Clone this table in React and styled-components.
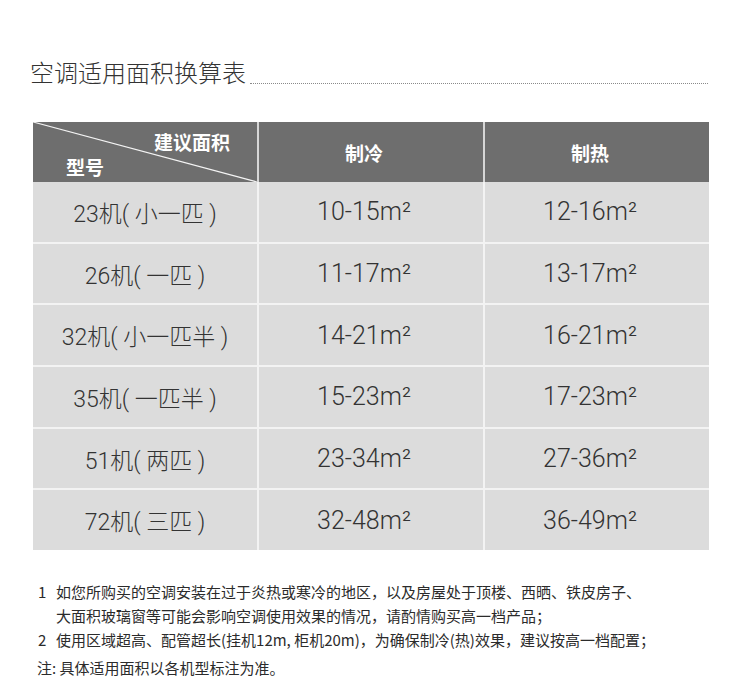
import React from 'react'
import styled, { createGlobalStyle } from 'styled-components'

const GlobalStyle = createGlobalStyle`
  html, body {
    margin: 0;
    padding: 0;
    background: #fff;
  }
  body {
    font-family: "Noto Sans CJK SC", "Noto Sans", sans-serif;
    color: #333;
  }
`

const rows = [
  { model: '23机( 小一匹 )', cool: '10-15', heat: '12-16' },
  { model: '26机( 一匹 )', cool: '11-17', heat: '13-17' },
  { model: '32机( 小一匹半 )', cool: '14-21', heat: '16-21' },
  { model: '35机( 一匹半 )', cool: '15-23', heat: '17-23' },
  { model: '51机( 两匹 )', cool: '23-34', heat: '27-36' },
  { model: '72机( 三匹 )', cool: '32-48', heat: '36-49' },
]

const App = () => {
  return (
    <Page>
      <GlobalStyle />
      <TitleBar>
        <Title>空调适用面积换算表</Title>
        <Dots />
      </TitleBar>

      <Table>
        <HeadRow>
          <CornerCell>
            <Diagonal viewBox="0 0 100 100" preserveAspectRatio="none">
              <line x1="0" y1="0" x2="100" y2="100" stroke="#f4f4f4" strokeWidth="1.2" vectorEffect="non-scaling-stroke" />
            </Diagonal>
            <CornerTop>建议面积</CornerTop>
            <CornerBottom>型号</CornerBottom>
          </CornerCell>
          <HeadCell>制冷</HeadCell>
          <HeadCell>制热</HeadCell>
        </HeadRow>
        <Body>
          {rows.map((r) => (
            <Row key={r.model}>
              <Cell>{r.model}</Cell>
              <Cell $value>{r.cool}m²</Cell>
              <Cell $value>{r.heat}m²</Cell>
            </Row>
          ))}
        </Body>
      </Table>

      <Notes>
        <Note>
          <Num>1</Num>
          <NoteText>
            <span>如您所购买的空调安装在过于炎热或寒冷的地区，以及房屋处于顶楼、西晒、铁皮房子、</span>
            <span>大面积玻璃窗等可能会影响空调使用效果的情况，请酌情购买高一档产品；</span>
          </NoteText>
        </Note>
        <Note>
          <Num>2</Num>
          <NoteText>
            <span>使用区域超高、配管超长(挂机12m, 柜机20m)，为确保制冷(热)效果，建议按高一档配置；</span>
          </NoteText>
        </Note>
        <Remark>注: 具体适用面积以各机型标注为准。</Remark>
      </Notes>
    </Page>
  )
}

const Page = styled.div`
  width: 748px;
  height: 690px;
  padding-top: 58px;
  box-sizing: border-box;
  overflow: hidden;
`

const TitleBar = styled.div`
  display: flex;
  align-items: flex-end;
  padding-left: 30px;
  width: 708px;
  box-sizing: border-box;
`

const Title = styled.h1`
  margin: 0;
  font-size: 24px;
  line-height: 28px;
  font-weight: 300;
  color: #333;
  white-space: nowrap;
`

const Dots = styled.div`
  flex: 1;
  margin-left: 4px;
  margin-bottom: 2px;
  border-bottom: 1px dotted #8a8a8a;
`

const Table = styled.div`
  margin: 36px 0 0 33px;
  width: 676px;
  display: flex;
  flex-direction: column;
`

const HeadRow = styled.div`
  display: grid;
  grid-template-columns: 224px 224px 224px;
  column-gap: 2px;
  height: 60px;
  background: #d6d6d6;
`

const HeadCell = styled.div`
  background: #6e6e6e;
  color: #fff;
  font-size: 19px;
  font-weight: 700;
  display: flex;
  align-items: center;
  justify-content: center;
  padding-right: 14px;
`

const CornerCell = styled.div`
  position: relative;
  background: #6e6e6e;
  color: #fff;
  font-size: 19px;
  font-weight: 700;
  line-height: 22px;
  display: flex;
  flex-direction: column;
  padding-top: 9px;
  box-sizing: border-box;
`

const Diagonal = styled.svg`
  position: absolute;
  inset: 0;
  width: 100%;
  height: 100%;
`

const CornerTop = styled.span`
  position: relative;
  align-self: flex-end;
  padding-right: 27px;
`

const CornerBottom = styled.span`
  position: relative;
  align-self: flex-start;
  padding-left: 33px;
  margin-top: 3px;
`

const Body = styled.div`
  height: 368px;
  display: flex;
  flex-direction: column;
  background: #f3f3f3;
`

const Row = styled.div`
  flex: 1;
  display: grid;
  grid-template-columns: 224px 224px 224px;
  column-gap: 2px;
  & + & {
    margin-top: 2px;
  }
`

const Cell = styled.div`
  background: #dcdcdc;
  display: flex;
  align-items: center;
  justify-content: center;
  padding-right: ${({ $value }) => ($value ? '14px' : '0')};
  font-family: Roboto, "Noto Sans CJK SC", sans-serif;
  font-weight: 300;
  font-size: ${({ $value }) => ($value ? '25px' : '23px')};
  color: #333;
  white-space: pre;
`

const Notes = styled.div`
  margin-top: 30px;
  padding-left: 37px;
  font-size: 15px;
  line-height: 24px;
  color: #2b2b2b;
`

const Note = styled.div`
  display: flex;
`

const Num = styled.span`
  width: 18px;
  flex-shrink: 0;
  padding-left: 1px;
`

const NoteText = styled.div`
  display: flex;
  flex-direction: column;
  white-space: nowrap;
`

const Remark = styled.div`
  margin-top: 4px;
`

export default App
